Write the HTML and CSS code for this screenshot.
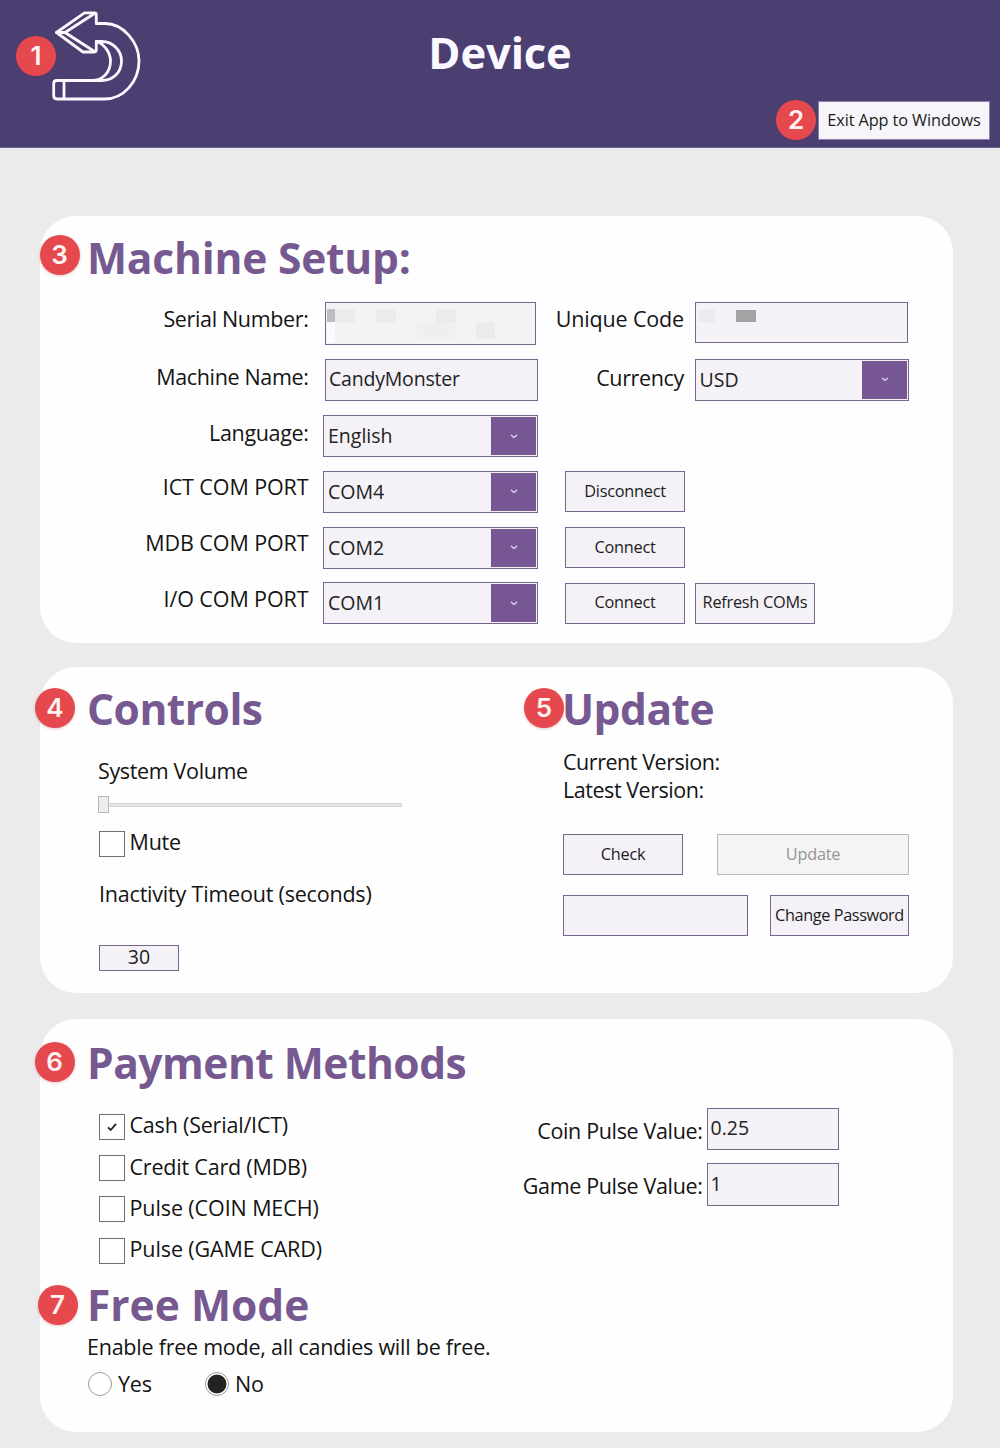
FILE: index.html
```html
<!DOCTYPE html>
<html lang="en">
<head>
<meta charset="utf-8">
<title>Device</title>
<link rel="stylesheet" href="styles.css">
</head>
<body>
<header class="topbar">
  <svg class="back" viewBox="0 0 96 96" width="96" height="96" fill="none" stroke="#fbf8ff" stroke-width="2.8" stroke-linejoin="round" stroke-linecap="round">
    <path d="M50.300 15.500V6.500Q50.300 4.800 48.500 4.800H38.500L10.500 24.500L37 44H47.500Q50.300 44 50.300 42V33.500"/>
    <path d="M10.500 24.500H19L48.500 5.500M19 24.500L48.500 43.500M50.300 15.500H59C77 15.500 93 34 93 53C93 74 77 91 59 91H11Q7.700 91 7.700 87.500V75.500Q7.700 72.500 11 72.500H55.500C66.500 72.500 75.500 65 75.500 53C75.500 42.500 66.500 33.500 56 33.500H50.300M50.300 33.500C58 36 64.500 44 64.500 53C64.500 64 57 72.500 46 72.500M18 72.500V91"/>
  </svg>
  <h1 class="title">Device</h1>
  <button class="btn exit">Exit App to Windows</button>
  <span class="badge b1">1</span>
  <span class="badge b2">2</span>
</header>
<main>
  <section class="card setup">
    <span class="badge b3">3</span>
    <h2>Machine Setup:</h2>
    <div class="form">
      <label class="lab first">Serial Number:</label>
      <div class="field serial">
        <i class="m1"></i><i class="m2"></i><i class="m3"></i><i class="m4"></i><i class="m5"></i><i class="m6"></i><i class="m7"></i>
      </div>
      <label class="lab lab2 first unique">Unique Code</label>
      <div class="field code"><i class="c1"></i><i class="c2"></i></div>

      <label class="lab">Machine Name:</label>
      <div class="field name">CandyMonster</div>
      <label class="lab lab2 cur">Currency</label>
      <div class="field select">USD<span class="drop"><svg width="8" height="5" viewBox="0 0 8 5"><path d="M1 1L4 3.500L7 1"/></svg></span></div>

      <label class="lab">Language:</label>
      <div class="field select wide">English<span class="drop"><svg width="8" height="5" viewBox="0 0 8 5"><path d="M1 1L4 3.500L7 1"/></svg></span></div>
      <div class="actions"></div>

      <label class="lab caps">ICT COM PORT</label>
      <div class="field select wide">COM4<span class="drop"><svg width="8" height="5" viewBox="0 0 8 5"><path d="M1 1L4 3.500L7 1"/></svg></span></div>
      <div class="actions"><button class="btn">Disconnect</button></div>

      <label class="lab caps">MDB COM PORT</label>
      <div class="field select wide">COM2<span class="drop"><svg width="8" height="5" viewBox="0 0 8 5"><path d="M1 1L4 3.500L7 1"/></svg></span></div>
      <div class="actions"><button class="btn">Connect</button></div>

      <label class="lab caps">I/O COM PORT</label>
      <div class="field select wide">COM1<span class="drop"><svg width="8" height="5" viewBox="0 0 8 5"><path d="M1 1L4 3.500L7 1"/></svg></span></div>
      <div class="actions"><button class="btn">Connect</button><button class="btn">Refresh COMs</button></div>
    </div>
  </section>

  <section class="card split">
    <span class="badge b4">4</span>
    <span class="badge b5">5</span>
    <div class="controls">
      <h2>Controls</h2>
      <div class="inset">
        <p class="text volume">System Volume</p>
        <div class="slider"><span class="thumb"></span><span class="track"></span></div>
        <label class="check mute"><span class="box"></span>Mute</label>
        <p class="text timeout">Inactivity Timeout (seconds)</p>
        <div class="field seconds">30</div>
      </div>
    </div>
    <div class="update">
      <h2>Update</h2>
      <p class="text">Current Version:</p>
      <p class="text">Latest Version:</p>
      <div class="row"><button class="btn">Check</button><button class="btn off" disabled>Update</button></div>
      <div class="row pass"><div class="field secret"></div><button class="btn change">Change Password</button></div>
    </div>
  </section>

  <section class="card pay">
    <span class="badge b6">6</span>
    <span class="badge b7">7</span>
    <h2>Payment Methods</h2>
    <div class="methods">
      <div class="checks">
        <label class="check"><span class="box"><svg width="12" height="12" viewBox="0 0 12 12"><path d="M2 6.300L4.700 9L10 2.800"/></svg></span>Cash (Serial/ICT)</label>
        <label class="check"><span class="box"></span>Credit Card (MDB)</label>
        <label class="check caps"><span class="box"></span>Pulse (COIN MECH)</label>
        <label class="check caps"><span class="box"></span>Pulse (GAME CARD)</label>
      </div>
      <div class="pulses">
        <label class="plab">Coin Pulse Value:</label><div class="field">0.25</div>
        <label class="plab">Game Pulse Value:</label><div class="field">1</div>
      </div>
    </div>
    <h2 class="free">Free Mode</h2>
    <p class="text enable">Enable free mode, all candies will be free.</p>
    <div class="radios">
      <label class="radio"><span class="dot"></span>Yes</label>
      <label class="radio"><span class="dot on"></span>No</label>
    </div>
  </section>
</main>
</body>
</html>
```
FILE: styles.css
```css
* { box-sizing: border-box; }
body {
  margin: 0;
  width: 1000px;
  height: 1448px;
  overflow: hidden;
  background: #ebebeb;
  color: #141414;
  font: 21.5px/30px "Open Sans", "Noto Sans", sans-serif;
}
h1, h2, p { margin: 0; }
.topbar {
  position: relative;
  height: 148px;
  background: #4b3f72;
  border-bottom: 1px solid #6a6085;
}
.back { position: absolute; left: 46px; top: 8px; }
.title {
  padding-top: 23px;
  text-align: center;
  color: #fbf9ff;
  font-size: 43.5px;
  line-height: 60px;
  letter-spacing: -0.1px;
}
.badge {
  position: absolute;
  width: 40px;
  height: 40px;
  border-radius: 50%;
  background: #e5484d;
  color: #fff3f3;
  font: 600 26px/39px Inter, sans-serif;
  text-align: center;
  box-shadow: 0 1px 3px rgba(150, 40, 50, .25);
}
.b1 { left: 16px; top: 36px; }
.b2 { left: 776px; top: 100px; }
.b3 { left: -0.5px; top: 19px; }
.b4 { left: -5px; top: 21px; }
.b5 { left: 484px; top: 21px; }
.b6 { left: -5.5px; top: 23px; }
.b7 { left: -2.5px; top: 266px; }
main {
  display: flex;
  flex-direction: column;
  padding: 68px 47px 0 40px;
}
.card {
  position: relative;
  background: #fefefe;
  border-radius: 36px;
}
h2 {
  color: #765990;
  font-size: 42.5px;
  line-height: 60px;
  letter-spacing: -0.5px;
  text-indent: -1px;
}
.setup { height: 427px; padding-top: 12px; }
.setup h2 { padding-left: 48px; letter-spacing: -0.2px; }
.form {
  display: grid;
  grid-template-columns: 284px 214px 157px 214px;
  grid-template-rows: 43px 42px 42px 42px 42px 42px;
  row-gap: 13.8px;
  margin-top: 14px;
}
.lab { padding: 3px 15.5px 0 0; text-align: right; letter-spacing: -0.35px; }
.lab.caps { padding-top: 2px; letter-spacing: -0.1px; }
.lab.first { padding-top: 2px; }
.lab.lab2 { padding-right: 11px; }
.lab.unique { letter-spacing: -0.15px; }
.lab.cur { padding-top: 4px; }
.field {
  display: flex;
  align-items: center;
  height: 42px;
  padding: 0 3px 2px;
  border: 1px solid #75688c;
  background: #f4f1f7;
  color: #222;
  font-size: 19.5px;
}
.name { margin-left: 1px; padding-bottom: 1px; letter-spacing: -0.2px; }
.select { justify-content: space-between; margin-left: -0.5px; padding: 0 1px 0 4px; }
.wide { margin: 0.5px 0 0 -1px; }
.drop {
  display: flex;
  align-items: center;
  justify-content: center;
  width: 45px;
  height: 38px;
  background: #765793;
}
.drop path { fill: none; stroke: #e6daf0; stroke-width: 1.3; }
.serial, .code { position: relative; }
.serial { width: 211px; height: 43px; margin-left: 1px; background: #f3f2f5; }
.code { width: 213px; height: 41px; margin-left: -0.5px; }
.serial i, .code i { position: absolute; display: block; height: 13px; top: 6px; background: #ebebed; }
.serial .m1 { left: 1px; width: 8px; background: #bebcc2; }
.serial .m2 { left: 9px; width: 20px; }
.serial .m3 { left: 50px; width: 20px; }
.serial .m4 { left: 110px; width: 20px; }
.serial .m5 { left: 91px; top: 19px; width: 38px; height: 17px; background: #efeef1; }
.serial .m6 { left: 150px; top: 19px; width: 19px; height: 17px; }
.serial .m7 { left: 1px; top: 19px; width: 8px; height: 21px; background: #fbfafc; }
.code .c1 { left: 2px; width: 17px; top: 7px; height: 12px; }
.code .c2 { left: 40px; width: 20px; top: 7px; height: 12px; background: #a3a3a3; }
.actions {
  grid-column: 3 / 5;
  display: flex;
  gap: 10px;
  padding: 1px 0 0 27px;
}
.btn {
  width: 120px;
  height: 41px;
  padding: 0 0 2px;
  border: 1px solid #75688c;
  background: #f4f1f7;
  color: #1c1c1c;
  font: 16.300px/24px "Open Sans", "Noto Sans", sans-serif;
  letter-spacing: -0.25px;
  white-space: nowrap;
}
.exit { position: absolute; left: 818px; top: 101px; width: 172px; height: 39px; border-color: #8d7fb0; background: #f6f5f9; letter-spacing: -0.1px; }
.split { display: flex; height: 326px; margin-top: 24px; padding-top: 12px; }
.controls { width: 523px; padding-left: 48px; }
.inset { padding-left: 10px; }
.volume { padding-top: 17px; letter-spacing: -0.35px; }
.slider { display: flex; align-items: center; width: 304px; height: 17px; margin-top: 10px; }
.thumb { width: 11px; height: 17px; background: #ececec; border: 1px solid #b8b8b8; }
.track { flex: 1; height: 4px; background: #e7e7e7; border: 1px solid #d6d6d6; border-left: 0; }
.check { display: flex; align-items: center; gap: 4.500px; height: 41.400px; white-space: nowrap; line-height: 26px; padding-bottom: 3px; letter-spacing: -0.2px; }
.check.caps { letter-spacing: -0.1px; }
.check .box {
  display: flex;
  align-items: center;
  justify-content: center;
  width: 26px;
  height: 26px;
  margin: 3px 0 0 1px;
  border: 1px solid #707070;
  background: #fff;
}
.box path { fill: none; stroke: #222; stroke-width: 1.800; }
.mute { margin-top: 10px; }
.timeout { padding: 15px 0 0 1px; letter-spacing: -0.2px; }
.seconds { justify-content: center; width: 80px; height: 26px; margin: 36px 0 0 1px; }
.update .text { line-height: 28px; letter-spacing: -0.45px; }
.update h2 + .text { padding-top: 9px; }
.row { display: flex; gap: 34px; margin-top: 30px; }
.row.pass { gap: 22px; margin-top: 20px; }
.off { width: 192px; border-color: #b9b9b9; background: #f4f4f4; color: #949494; }
.secret { width: 185px; height: 41px; }
.change { width: 139px; letter-spacing: -0.4px; }
.pay { height: 413px; margin-top: 26px; padding: 14px 0 0 48px; }
.methods { display: flex; height: 182px; padding: 13px 0 0 10px; }
.checks { width: 385px; }
.pulses {
  display: grid;
  grid-template-columns: 223.5px 132px;
  grid-template-rows: 42px 43px;
  row-gap: 13px;
  margin-top: 2px;
}
.plab { padding: 8px 4px 0 0; text-align: right; letter-spacing: -0.35px; }
.pulses .field { height: auto; padding: 0 3px 2px; }
.free { letter-spacing: 0; }
.enable { margin: -3px 0 0 -1px; letter-spacing: -0.24px; }
.radios { display: flex; height: 30px; margin-top: 7px; }
.radio { display: flex; align-items: center; gap: 6px; width: 117px; letter-spacing: -0.2px; }
.dot { width: 24px; height: 24px; border: 1px solid #999; border-radius: 50%; background: #fff; }
.dot.on { background: radial-gradient(circle, #222 0 9px, #fff 9.800px); }
```
